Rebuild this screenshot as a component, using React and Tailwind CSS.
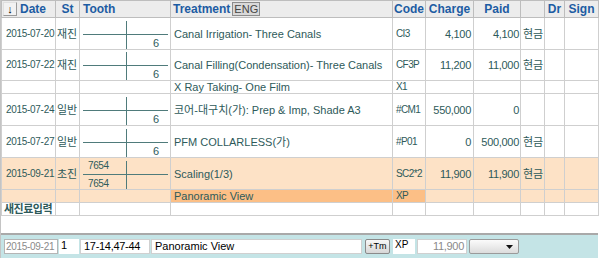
import React from "react";

const font = { fontFamily: '"Liberation Sans", "Noto Sans CJK KR", sans-serif' };

function ToothChart({ upper, lower }) {
  return (
    <svg width="91" height="30" viewBox="0 0 91 30" className="block">
      <line x1="3" y1="15.5" x2="88" y2="15.5" stroke="#4f7b7b" strokeWidth="1" />
      <line x1="46.5" y1="2" x2="46.5" y2="30" stroke="#4f7b7b" strokeWidth="1" />
      {upper && (
        <text x="8" y="10" fontSize="10" fill="#2f5b5b" fontFamily="Liberation Sans" letterSpacing="-0.4">
          {upper}
        </text>
      )}
      {lower && (
        <text x="8" y="28" fontSize="10" fill="#2f5b5b" fontFamily="Liberation Sans" letterSpacing="-0.4">
          {lower}
        </text>
      )}
      {!upper && (
        <text x="73" y="28" fontSize="11" fill="#2f5b5b" fontFamily="Liberation Sans">
          6
        </text>
      )}
    </svg>
  );
}

const cell = "border border-[#cfcfcf] p-0 align-middle whitespace-nowrap overflow-hidden leading-[12px]";

function Row({ h, bg, date, st, tooth, tr, code, charge, paid, cash, trBg, codeBg }) {
  return (
    <tr className={`${h} ${bg || ""}`}>
      <td className={`${cell} pl-[4px] text-[10px] tracking-[-0.3px]`}>{date}</td>
      <td className={`${cell} pl-[1px]`}>{st}</td>
      <td className={cell}>{tooth}</td>
      <td className={`${cell} pl-[3px] ${trBg || ""}`}>{tr}</td>
      <td className={`${cell} pl-[3px] text-[10px] tracking-[-0.6px] ${codeBg || ""}`}>{code}</td>
      <td className={`${cell} pr-[2px] text-right tracking-[-0.3px]`}>{charge}</td>
      <td className={`${cell} pr-[1px] text-right tracking-[-0.3px]`}>{paid}</td>
      <td className={`${cell} pl-[2px]`}>{cash}</td>
      <td className={cell}></td>
      <td className={cell}></td>
    </tr>
  );
}

export default function App() {
  const th = "border border-[#bdbdbd] p-0 text-[12px] leading-[14px] font-bold text-[#1d5ca3] align-middle whitespace-nowrap";
  return (
    <div className="w-[600px] h-[258px] bg-white text-[11px] text-[#2e5a5a] overflow-hidden" style={font}>
      <div className="w-[598px] h-[258px] border-l border-[#c4c4c4] flex flex-col">
        <table className="table-fixed border-collapse w-[597px]">
          <colgroup>
            <col className="w-[54px]" />
            <col className="w-[24px]" />
            <col className="w-[91px]" />
            <col className="w-[222px]" />
            <col className="w-[33px]" />
            <col className="w-[48px]" />
            <col className="w-[47px]" />
            <col className="w-[24px]" />
            <col className="w-[20px]" />
            <col className="w-[34px]" />
          </colgroup>
          <thead>
            <tr className="h-[17px] bg-[#ececec]">
              <th className={`${th} text-left`}>
                <div className="flex items-center gap-[3px]">
                  <span className="ml-[1px] flex h-[14px] w-[14px] items-center justify-center border border-[#9a9a9a] border-t-[#e0e0e0] border-l-[#e0e0e0] bg-[#f2f2f2] text-[11px] text-black">
                    ↓
                  </span>
                  <span>Date</span>
                </div>
              </th>
              <th className={th}>St</th>
              <th className={`${th} text-left pl-[3px]`}>Tooth</th>
              <th className={`${th} text-left pl-[2px]`}>
                <div className="flex items-center gap-[2px]">
                  <span>Treatment</span>
                  <span className="border border-[#8c8c8c] bg-[#d9d9d9] px-[1px] text-[11px] leading-[12px] font-normal text-[#444]">
                    ENG
                  </span>
                </div>
              </th>
              <th className={th}>Code</th>
              <th className={th}>Charge</th>
              <th className={th}>Paid</th>
              <th className={th}></th>
              <th className={th}>Dr</th>
              <th className={th}>Sign</th>
            </tr>
          </thead>
          <tbody>
            <Row h="h-[32px]" date="2015-07-20" st="재진" tooth={<ToothChart />} tr="Canal Irrigation- Three Canals" code="CI3" charge="4,100" paid="4,100" cash="현금" />
            <Row h="h-[31px]" date="2015-07-22" st="재진" tooth={<ToothChart />} tr="Canal Filling(Condensation)- Three Canals" code="CF3P" charge="11,200" paid="11,000" cash="현금" />
            <Row h="h-[13px]" tr="X Ray Taking- One Film" code="X1" />
            <Row h="h-[32px]" date="2015-07-24" st="일반" tooth={<ToothChart />} tr="코어-대구치(가): Prep & Imp, Shade A3" code="#CM1" charge="550,000" paid="0" />
            <Row h="h-[32px]" date="2015-07-27" st="일반" tooth={<ToothChart />} tr="PFM COLLARLESS(가)" code="#P01" charge="0" paid="500,000" cash="현금" />
            <Row h="h-[32px]" bg="bg-[#fde2c6]" date="2015-09-21" st="초진" tooth={<ToothChart upper="7654" lower="7654" />} tr="Scaling(1/3)" code="SC2*2" charge="11,900" paid="11,900" cash="현금" />
            <Row h="h-[13px]" bg="bg-[#fde2c6]" tr="Panoramic View" code="XP" trBg="bg-[#fcbf86]" codeBg="bg-[#fcbf86]" />
            <tr className="h-[13px]">
              <td className={`${cell} pl-[2px] font-bold text-[#2e5a5a] tracking-[-0.5px]`}>새진료입력</td>
              <td className={cell}></td>
              <td className={cell}></td>
              <td className={cell}></td>
              <td className={cell}></td>
              <td className={cell}></td>
              <td className={cell}></td>
              <td className={cell}></td>
              <td className={cell}></td>
              <td className={cell}></td>
            </tr>
          </tbody>
        </table>
        <div className="flex-1" />
        <div className="border-t-2 border-[#a9a9a9] bg-[#c4e4e6] h-[25px] flex items-center pl-[3px] gap-[1px]">
          <div className="w-[54px] h-[15px] border border-[#b5b5b5] bg-white text-[#8a8a8a] text-[10px] leading-[13px] pl-[1px] tracking-[-0.3px]">2015-09-21</div>
          <div className="w-[20px] h-[15px] bg-white text-[11px] leading-[13px] pl-[2px] text-black">1</div>
          <div className="w-[70px] h-[15px] border border-[#d0d0d0] bg-white text-[11px] leading-[13px] pl-[3px] text-black tracking-[-0.3px]">17-14,47-44</div>
          <div className="w-[211px] h-[15px] border border-[#d0d0d0] bg-white text-[11px] leading-[13px] pl-[3px] text-black">Panoramic View</div>
          <div className="ml-[2px] w-[25px] h-[15px] rounded-[2px] border border-[#8a8a8a] bg-gradient-to-b from-[#f8f8f8] to-[#d6d6d6] text-[9px] leading-[13px] text-center text-black">+Tm</div>
          <div className="ml-[2px] w-[22px] h-[15px] bg-white text-[10px] leading-[12px] pl-[2px] text-black">XP</div>
          <div className="ml-[1px] w-[50px] h-[15px] border border-[#d0d0d0] bg-white text-[11px] leading-[13px] text-right pr-[2px] text-[#8a8a8a] tracking-[-0.3px]">11,900</div>
          <div className="ml-[1px] w-[50px] h-[15px] rounded-[2px] border border-[#9a9a9a] bg-gradient-to-b from-[#fbfbfb] to-[#dcdcdc] flex items-center justify-end pr-[5px]">
            <svg width="7" height="4" viewBox="0 0 7 4"><path d="M0 0h7L3.5 4z" fill="#111" /></svg>
          </div>
        </div>
      </div>
    </div>
  );
}
